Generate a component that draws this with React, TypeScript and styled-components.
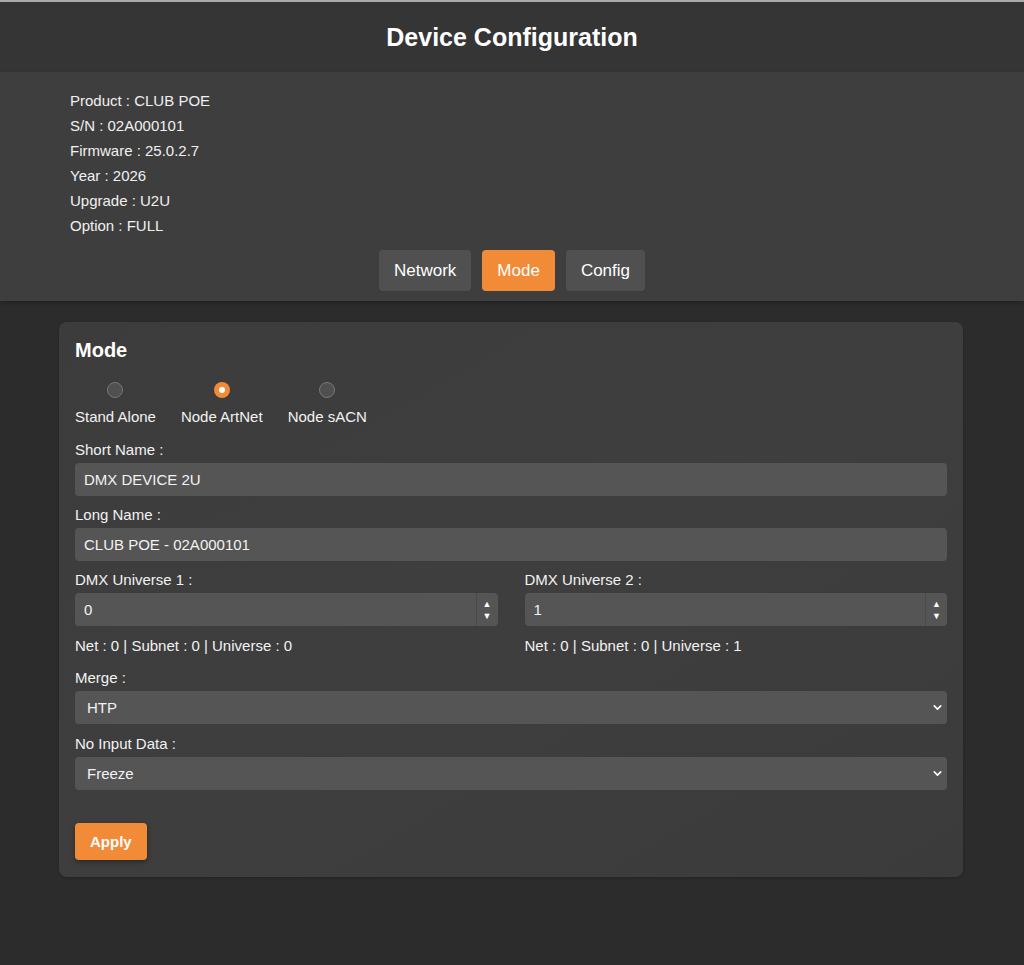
import React, { useState } from "react";
import styled, { createGlobalStyle } from "styled-components";
import { ChevronDown } from "lucide-react";

const GlobalStyle = createGlobalStyle`
  html, body {
    margin: 0;
    padding: 0;
    background: #2c2c2c;
    color: #f2f2f2;
    font-family: "Liberation Sans", Arial, sans-serif;
    font-size: 15px;
  }
  * { box-sizing: border-box; }
`;

const Page = styled.div`
  min-height: 965px;
  background: #2c2c2c;
  border-top: 2px solid #a9a9a9;
`;

const Header = styled.header`
  height: 70px;
  background: #353535;
  display: flex;
  align-items: center;
  justify-content: center;
`;

const Title = styled.h1`
  margin: 0;
  font-size: 25px;
  font-weight: bold;
  color: #ffffff;
`;

const InfoSection = styled.section`
  background: #3e3e3e;
  padding: 16px 70px 10px;
  box-shadow: 0 2px 4px rgba(0, 0, 0, 0.25);
`;

const InfoLine = styled.div`
  height: 25px;
  line-height: 25px;
  color: #f0f0f0;
`;

const Tabs = styled.nav`
  display: flex;
  justify-content: center;
  gap: 11px;
  margin-top: 12px;
`;

const Tab = styled.button<{ $active?: boolean }>`
  height: 41px;
  padding: 0 15px;
  border: none;
  border-radius: 4px;
  font-family: inherit;
  font-size: 17px;
  color: #ffffff;
  background: ${(p) => (p.$active ? "#f28b38" : "#505050")};
  cursor: pointer;
`;

const Main = styled.main`
  padding: 21px 61px 0 59px;
`;

const Card = styled.div`
  background: linear-gradient(150deg, #3c3c3c 0%, #3e3e3e 50%, #3b3b3b 100%);
  border-radius: 8px;
  padding: 16px 16px 17px;
  box-shadow: 0 1px 3px rgba(0, 0, 0, 0.2);
`;

const CardTitle = styled.h2`
  margin: 0 0 20px;
  font-size: 20px;
  font-weight: bold;
  color: #ffffff;
  line-height: 24px;
`;

const RadioGroup = styled.div`
  display: flex;
  gap: 25px;
  margin-bottom: 15px;
`;

const RadioItem = styled.label`
  display: flex;
  flex-direction: column;
  align-items: center;
  gap: 10px;
  cursor: pointer;
`;

const RadioDot = styled.span<{ $checked?: boolean }>`
  width: 16px;
  height: 16px;
  border-radius: 50%;
  display: flex;
  align-items: center;
  justify-content: center;
  background: ${(p) => (p.$checked ? "#f28b38" : "#505050")};
  border: ${(p) => (p.$checked ? "none" : "1.5px solid #777")};
  &::after {
    content: "";
    width: 6px;
    height: 6px;
    border-radius: 50%;
    background: #fff;
    display: ${(p) => (p.$checked ? "block" : "none")};
  }
`;

const RadioLabel = styled.span`
  font-size: 15px;
  line-height: 18px;
`;

const Field = styled.div`
  display: flex;
  flex-direction: column;
  margin-bottom: 10px;
`;

const Label = styled.label`
  font-size: 15px;
  line-height: 18px;
  margin-bottom: 4px;
`;

const TextInput = styled.input`
  height: 33px;
  width: 100%;
  border: none;
  border-radius: 4px;
  background: #555555;
  color: #f2f2f2;
  font-family: inherit;
  font-size: 15px;
  padding: 0 9px;
  outline: none;
`;

const Row = styled.div`
  display: grid;
  grid-template-columns: 1fr 1fr;
  gap: 27px;
`;

const NumberBox = styled.div`
  display: flex;
  height: 33px;
  border-radius: 4px;
  background: #555555;
  overflow: hidden;
`;

const NumberInput = styled.input`
  flex: 1;
  min-width: 0;
  border: none;
  background: transparent;
  color: #f2f2f2;
  font-family: inherit;
  font-size: 15px;
  padding: 0 9px;
  outline: none;
  -moz-appearance: textfield;
  &::-webkit-inner-spin-button,
  &::-webkit-outer-spin-button {
    -webkit-appearance: none;
    margin: 0;
  }
`;

const Spinner = styled.div`
  width: 22px;
  border-left: 1px solid #4a4a4a;
  display: flex;
  flex-direction: column;
  align-items: center;
  justify-content: center;
  gap: 2px;
  font-size: 9px;
  line-height: 10px;
  color: #ffffff;
  user-select: none;
`;

const Hint = styled.div`
  font-size: 15px;
  line-height: 18px;
  margin: 11px 0 4px;
`;

const SelectWrap = styled.div`
  position: relative;
  height: 33px;
  margin-bottom: 1px;
  svg {
    position: absolute;
    right: 3px;
    top: 10px;
    pointer-events: none;
    color: #ffffff;
  }
`;

const Select = styled.select`
  appearance: none;
  width: 100%;
  height: 100%;
  border: none;
  border-radius: 4px;
  background: #555555;
  color: #f2f2f2;
  font-family: inherit;
  font-size: 15px;
  padding: 0 12px;
  outline: none;
`;

const ApplyButton = styled.button`
  margin-top: 22px;
  height: 37px;
  padding: 0 15px;
  border: none;
  border-radius: 4px;
  background: #f28b38;
  color: #ffffff;
  font-family: inherit;
  font-size: 15px;
  font-weight: bold;
  box-shadow: 0 2px 5px rgba(0, 0, 0, 0.35);
  cursor: pointer;
`;

const info = [
  "Product : CLUB POE",
  "S/N : 02A000101",
  "Firmware : 25.0.2.7",
  "Year : 2026",
  "Upgrade : U2U",
  "Option : FULL",
];

const modes = ["Stand Alone", "Node ArtNet", "Node sACN"];

const universeInfo = (u: number) =>
  `Net : ${(u >> 8) & 0x7f} | Subnet : ${(u >> 4) & 0xf} | Universe : ${u & 0xf}`;

const App: React.FC = () => {
  const [tab, setTab] = useState("Mode");
  const [mode, setMode] = useState("Node ArtNet");
  const [u1, setU1] = useState(0);
  const [u2, setU2] = useState(1);

  return (
    <>
      <GlobalStyle />
      <Page>
        <Header>
          <Title>Device Configuration</Title>
        </Header>
        <InfoSection>
          {info.map((line) => (
            <InfoLine key={line}>{line}</InfoLine>
          ))}
          <Tabs>
            {["Network", "Mode", "Config"].map((t) => (
              <Tab key={t} $active={tab === t} onClick={() => setTab(t)}>
                {t}
              </Tab>
            ))}
          </Tabs>
        </InfoSection>
        <Main>
          <Card>
            <CardTitle>Mode</CardTitle>
            <RadioGroup>
              {modes.map((m) => (
                <RadioItem key={m} onClick={() => setMode(m)}>
                  <RadioDot $checked={mode === m} />
                  <RadioLabel>{m}</RadioLabel>
                </RadioItem>
              ))}
            </RadioGroup>
            <Field>
              <Label>Short Name :</Label>
              <TextInput defaultValue="DMX DEVICE 2U" />
            </Field>
            <Field>
              <Label>Long Name :</Label>
              <TextInput defaultValue="CLUB POE - 02A000101" />
            </Field>
            <Row>
              <Field>
                <Label>DMX Universe 1 :</Label>
                <NumberBox>
                  <NumberInput
                    type="number"
                    value={u1}
                    onChange={(e) => setU1(Number(e.target.value))}
                  />
                  <Spinner>
                    <span onClick={() => setU1(u1 + 1)}>▲</span>
                    <span onClick={() => setU1(Math.max(0, u1 - 1))}>▼</span>
                  </Spinner>
                </NumberBox>
                <Hint>{universeInfo(u1)}</Hint>
              </Field>
              <Field>
                <Label>DMX Universe 2 :</Label>
                <NumberBox>
                  <NumberInput
                    type="number"
                    value={u2}
                    onChange={(e) => setU2(Number(e.target.value))}
                  />
                  <Spinner>
                    <span onClick={() => setU2(u2 + 1)}>▲</span>
                    <span onClick={() => setU2(Math.max(0, u2 - 1))}>▼</span>
                  </Spinner>
                </NumberBox>
                <Hint>{universeInfo(u2)}</Hint>
              </Field>
            </Row>
            <Field>
              <Label>Merge :</Label>
              <SelectWrap>
                <Select defaultValue="HTP">
                  <option>HTP</option>
                  <option>LTP</option>
                </Select>
                <ChevronDown size={13} strokeWidth={3} />
              </SelectWrap>
            </Field>
            <Field>
              <Label>No Input Data :</Label>
              <SelectWrap>
                <Select defaultValue="Freeze">
                  <option>Freeze</option>
                  <option>Blackout</option>
                </Select>
                <ChevronDown size={13} strokeWidth={3} />
              </SelectWrap>
            </Field>
            <ApplyButton>Apply</ApplyButton>
          </Card>
        </Main>
      </Page>
    </>
  );
};

export default App;
